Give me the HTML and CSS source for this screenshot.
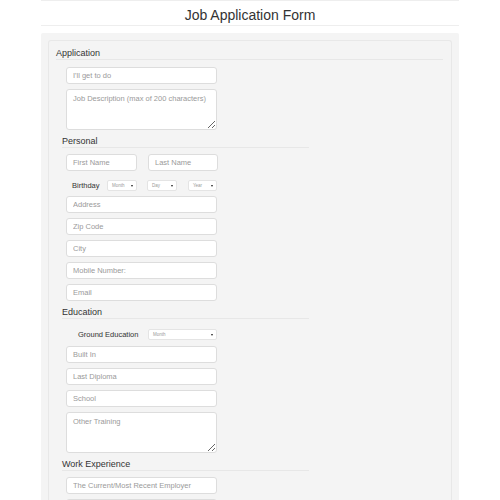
FILE: index.html
```html
<!DOCTYPE html>
<html>
<head>
<meta charset="utf-8">
<link rel="stylesheet" href="styles.css">
</head>
<body>
<div class="page">
  <div class="header">Job Application Form</div>
  <div class="panel">
    <div class="well">
      <div class="legend">Application</div>
      <div class="fields">
        <input class="field" placeholder="I'll get to do">
        <textarea class="field area" placeholder="Job Description (max of 200 characters)"></textarea>
      </div>
      <div class="sub">
        <div class="legend sublegend">Personal</div>
        <div class="subfields">
          <div class="row">
            <input class="field half" placeholder="First Name">
            <input class="field half2" placeholder="Last Name">
          </div>
          <div class="birth">
            <span class="blabel">Birthday</span>
            <span class="sel s1"><span class="seltext">Month</span></span>
            <span class="sel s2"><span class="seltext">Day</span></span>
            <span class="sel s3"><span class="seltext">Year</span></span>
          </div>
          <input class="field" placeholder="Address">
          <input class="field" placeholder="Zip Code">
          <input class="field" placeholder="City">
          <input class="field" placeholder="Mobile Number:">
          <input class="field" placeholder="Email">
        </div>
        <div class="legend sublegend">Education</div>
        <div class="subfields">
          <div class="ground">
            <span class="glabel">Ground Education</span>
            <span class="sel gsel"><span class="seltext">Month</span></span>
          </div>
          <input class="field" placeholder="Built In">
          <input class="field" placeholder="Last Diploma">
          <input class="field" placeholder="School">
          <textarea class="field area" placeholder="Other Training"></textarea>
        </div>
        <div class="legend sublegend">Work Experience</div>
        <div class="subfields">
          <input class="field" placeholder="The Current/Most Recent Employer">
          <input class="field" placeholder="Position">
          <input class="field" placeholder="Period">
        </div>
      </div>
    </div>
  </div>
</div>
</body>
</html>
```

FILE: styles.css
```css
html, body {
  margin: 0;
  padding: 0;
  background: #fff;
  font-family: "Liberation Sans", Arial, sans-serif;
  color: #333;
}
.page {
  width: 418px;
  margin: 0 auto;
  border-top: 1px solid #eeeeee;
}
.header {
  height: 24px;
  line-height: 28px;
  text-align: center;
  font-size: 14px;
  color: #333;
  border-bottom: 1px solid #eeeeee;
}
.panel {
  margin-top: 7px;
  background: #f4f4f4;
  padding: 7px 7px 0 7px;
  border-radius: 2px;
}
.well {
  border: 1px solid #e8e8e8;
  border-bottom: none;
  border-radius: 3px 3px 0 0;
  padding: 6px 8px 0 7px;
}
.legend {
  font-size: 9px;
  line-height: 12px;
  color: #333;
  border-bottom: 1px solid #e7e7e7;
  margin-bottom: 7px;
}
.fields {
  padding-left: 10px;
}
.sub {
  margin-left: 6px;
  width: 247px;
}
.sublegend {
  margin-bottom: 6px;
}
.subfields {
  padding-left: 4px;
}
.field {
  display: block;
  box-sizing: border-box;
  width: 151px;
  height: 17px;
  margin: 0 0 5px 0;
  padding: 0 6px;
  border: 1px solid #dddddd;
  border-radius: 3px;
  background: #fff;
  font-family: "Liberation Sans", Arial, sans-serif;
  font-size: 7.5px;
  color: #555;
  outline: none;
}
.field::placeholder {
  color: #9a9a9a;
}
.area {
  height: 41px;
  padding-top: 4px;
  resize: vertical;
}
.row {
  display: flex;
  margin-bottom: 9px;
}
.row .field {
  margin: 0;
}
.half {
  width: 71px !important;
}
.half2 {
  width: 70px !important;
  margin-left: 11px !important;
}
.birth {
  display: flex;
  align-items: center;
  height: 11px;
  margin-bottom: 5px;
}
.blabel {
  font-size: 7.5px;
  color: #333;
  padding-left: 6px;
  width: 35px;
}
.sel {
  position: relative;
  display: flex;
  align-items: center;
  box-sizing: border-box;
  height: 11px;
  background: #fff;
  border: 1px solid #e4e4e4;
  border-radius: 2px;
  padding-left: 4px;
}
.sel::after {
  content: "";
  position: absolute;
  right: 3px;
  top: 3.5px;
  border-left: 1.5px solid transparent;
  border-right: 1.5px solid transparent;
  border-top: 2.5px solid #222;
}
.seltext {
  font-size: 4.5px;
  color: #999;
}
.s1 { width: 30px; }
.s2 { width: 30px; margin-left: 10px; }
.s3 { width: 29px; margin-left: 11px; }
.ground {
  display: flex;
  align-items: center;
  height: 11px;
  margin-top: 10px;
  margin-bottom: 6px;
}
.glabel {
  font-size: 7.5px;
  color: #333;
  padding-left: 12px;
  width: 70px;
}
.gsel {
  width: 69px;
}
```
